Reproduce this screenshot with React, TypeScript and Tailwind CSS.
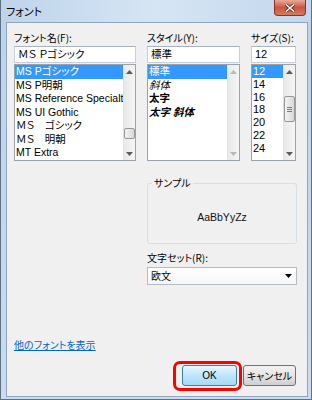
import React from 'react';

const jp = "font-['Noto_Sans_CJK_JP','Noto_Sans',sans-serif] [font-feature-settings:'palt']";
const listFont = "font-['Liberation_Sans','Noto_Sans_CJK_JP',sans-serif]";

type Item = { label: string; cls?: string };

function Arrow({ dir, disabled }: { dir: 'up' | 'down'; disabled?: boolean }) {
    return (
        <div className="h-[13px] flex items-center justify-center">
            <svg width="7" height="4" viewBox="0 0 7 4">
                <path
                    d={dir === 'up' ? 'M0 4 L3.5 0 L7 4 Z' : 'M0 0 L3.5 4 L7 0 Z'}
                    fill={disabled ? '#b8b8b8' : '#5a5a5a'}
                />
            </svg>
        </div>
    );
}

function ScrollBar({ thumb, grip, disabled }: { thumb?: string; grip?: boolean; disabled?: boolean }) {
    return (
        <div className="w-[12px] flex flex-col bg-gradient-to-r from-[#e9e9e9] to-[#f5f5f5] border-l border-[#e2e2e2]">
            <Arrow dir="up" disabled={disabled} />
            <div className="flex-1 flex flex-col items-center">
                {thumb && (
                    <div
                        className={`${thumb} w-[11px] rounded-[2px] border border-[#979797] bg-gradient-to-r from-[#f3f3f3] to-[#d8d8d8] flex flex-col items-center justify-center gap-[1px]`}
                    >
                        {grip && (
                            <>
                                <div className="w-[5px] h-[1px] bg-[#7a7a7a]" />
                                <div className="w-[5px] h-[1px] bg-[#7a7a7a]" />
                                <div className="w-[5px] h-[1px] bg-[#7a7a7a]" />
                            </>
                        )}
                    </div>
                )}
            </div>
            <Arrow dir="down" disabled={disabled} />
        </div>
    );
}

function ListBox({
    items,
    rowCls,
    textCls,
    thumb,
    grip,
    disabled,
}: {
    items: Item[];
    rowCls: string;
    textCls: string;
    thumb?: string;
    grip?: boolean;
    disabled?: boolean;
}) {
    return (
        <div className="h-[97px] mt-[1px] border border-[#9aa3ad] bg-white flex overflow-hidden">
            <div className="flex-1 overflow-hidden">
                {items.map((it, i) => (
                    <div
                        key={i}
                        className={`${rowCls} ${textCls} ${it.cls ?? ''} whitespace-nowrap overflow-hidden pl-[1px] ${
                            i === 0 ? 'bg-[#3399ff] text-white' : 'text-black'
                        }`}
                    >
                        {it.label}
                    </div>
                ))}
            </div>
            <ScrollBar thumb={thumb} grip={grip} disabled={disabled} />
        </div>
    );
}

function TextBox({ value, textCls }: { value: string; textCls: string }) {
    return (
        <div
            className={`h-[17px] border border-[#c5d0dc] border-t-[#aab3bd] bg-white pl-[3px] leading-[15px] text-black ${textCls}`}
        >
            {value}
        </div>
    );
}

export default function App() {
    const fonts: Item[] = [
        { label: 'MS Pゴシック' },
        { label: 'MS P明朝' },
        { label: 'MS Reference Specialty' },
        { label: 'MS UI Gothic' },
        { label: 'ＭＳ　ゴシック' },
        { label: 'ＭＳ　明朝' },
        { label: 'MT Extra' },
    ];
    const styles: Item[] = [
        { label: '標準' },
        { label: '斜体', cls: 'italic' },
        { label: '太字', cls: 'font-bold' },
        { label: '太字 斜体', cls: 'font-bold italic' },
    ];
    const sizes: Item[] = ['12', '14', '16', '18', '20', '22', '24'].map((s) => ({ label: s }));

    return (
        <div className={`w-[312px] h-[400px] flex flex-col bg-gradient-to-b from-[#bcd3ea] to-[#c9dcf0] border-x border-b border-[#5d7188] ${jp}`}>
            {/* title bar */}
            <div className="h-[22px] flex items-start bg-gradient-to-r from-[#bed4eb] via-[#d6e5f4] to-[#c2d7ed]">
                <div className="pl-[5px] pt-[5px] text-[11px] leading-[12px] text-black">フォント</div>
                <div className="ml-auto mr-[5px] w-[32px] h-[16px] rounded-b-[4px] border border-t-0 border-[#8c3226] bg-gradient-to-b from-[#e9a899] via-[#c9553f] to-[#d77a5f] flex items-center justify-center">
                    <svg width="10" height="8" viewBox="0 0 10 8">
                        <path d="M1 0.5 L9 7.5 M9 0.5 L1 7.5" stroke="#5b1a12" strokeWidth="3" />
                        <path d="M1 0.5 L9 7.5 M9 0.5 L1 7.5" stroke="#ffffff" strokeWidth="1.6" />
                    </svg>
                </div>
            </div>

            {/* client area */}
            <div className="ml-[5px] w-[302px] h-[375px] border border-[#8fa5bf] bg-[#f0f0f0] flex flex-col pl-[7px] pt-[9px] text-[10px] text-black">
                <div className="flex gap-[11px]">
                    <div className="w-[122px] flex flex-col">
                        <div className="leading-[12px] h-[12px]">フォント名(F):</div>
                        <div className="mt-[2px]">
                            <TextBox value="ＭＳ Ｐゴシック" textCls={`${listFont} text-[10.5px]`} />
                        </div>
                        <ListBox
                            items={fonts}
                            rowCls="h-[13.5px] leading-[13.5px]"
                            textCls={`${listFont} text-[10.5px]`}
                            thumb="mt-[50px] h-[11px]"
                        />
                    </div>
                    <div className="w-[93px] flex flex-col">
                        <div className="leading-[12px] h-[12px]">スタイル(Y):</div>
                        <div className="mt-[2px]">
                            <TextBox value="標準" textCls={`${listFont} text-[10.5px]`} />
                        </div>
                        <ListBox
                            items={styles}
                            rowCls="h-[13.5px] leading-[13.5px]"
                            textCls={`${listFont} text-[10.5px]`}
                            disabled
                        />
                    </div>
                    <div className="w-[45px] flex flex-col">
                        <div className="leading-[12px] h-[12px]">サイズ(S):</div>
                        <div className="mt-[2px]">
                            <TextBox value="12" textCls={`${listFont} text-[11px]`} />
                        </div>
                        <ListBox
                            items={sizes}
                            rowCls="h-[12.75px] leading-[12.75px]"
                            textCls={`${listFont} text-[11px]`}
                            thumb="mt-[18px] h-[26px]"
                            grip
                        />
                    </div>
                </div>

                {/* sample + charset */}
                <div className="ml-[133px] w-[150px] flex flex-col">
                    <fieldset className="mt-[16px] h-[67px] border border-[#d5dfe5] rounded-[3px]">
                        <legend className="ml-[4px] px-[2px] leading-[12px] text-[10px]">サンプル</legend>
                        <div className="h-[53px] pt-[5px] flex items-center justify-center">
                            <span className={`${listFont} text-[10.5px] text-[#111]`}>AaBbYyZz</span>
                        </div>
                    </fieldset>
                    <div className="mt-[8px] leading-[12px] h-[12px]">文字セット(R):</div>
                    <div className="mt-[3px] h-[18px] border border-[#b5bcc4] bg-gradient-to-b from-white to-[#f6f6f6] flex items-center pl-[3px] pr-[4px]">
                        <span className="leading-[12px]">欧文</span>
                        <svg className="ml-auto" width="7" height="4" viewBox="0 0 7 4">
                            <path d="M0 0 L3.5 4 L7 0 Z" fill="#000" />
                        </svg>
                    </div>
                </div>

                {/* link */}
                <div className="mt-[54px] leading-[12px] h-[12px]">
                    <span className="text-[#0066cc] underline">他のフォントを表示</span>
                </div>

                {/* buttons */}
                <div className="mt-[14px] flex justify-end gap-[6px] pr-[11px]">
                    <div className="relative">
                        <div className="absolute -left-[9px] -right-[5px] -top-[4px] -bottom-[5px] border-[3px] border-[#ff0000] rounded-[7px]" />
                        <div className="w-[55px] h-[21px] rounded-[3px] border border-[#3c7fb1] bg-gradient-to-b from-[#eaf6fd] via-[#bee6fd] to-[#a7d9f5] flex items-center justify-center">
                            <span className={`${listFont} text-[10px] leading-[12px]`}>OK</span>
                        </div>
                    </div>
                    <div className="w-[53px] h-[21px] rounded-[3px] border border-[#707070] bg-gradient-to-b from-[#f2f2f2] via-[#e5e5e5] to-[#cfcfcf] flex items-center justify-center">
                        <span className="leading-[12px]">キャンセル</span>
                    </div>
                </div>
            </div>
        </div>
    );
}
